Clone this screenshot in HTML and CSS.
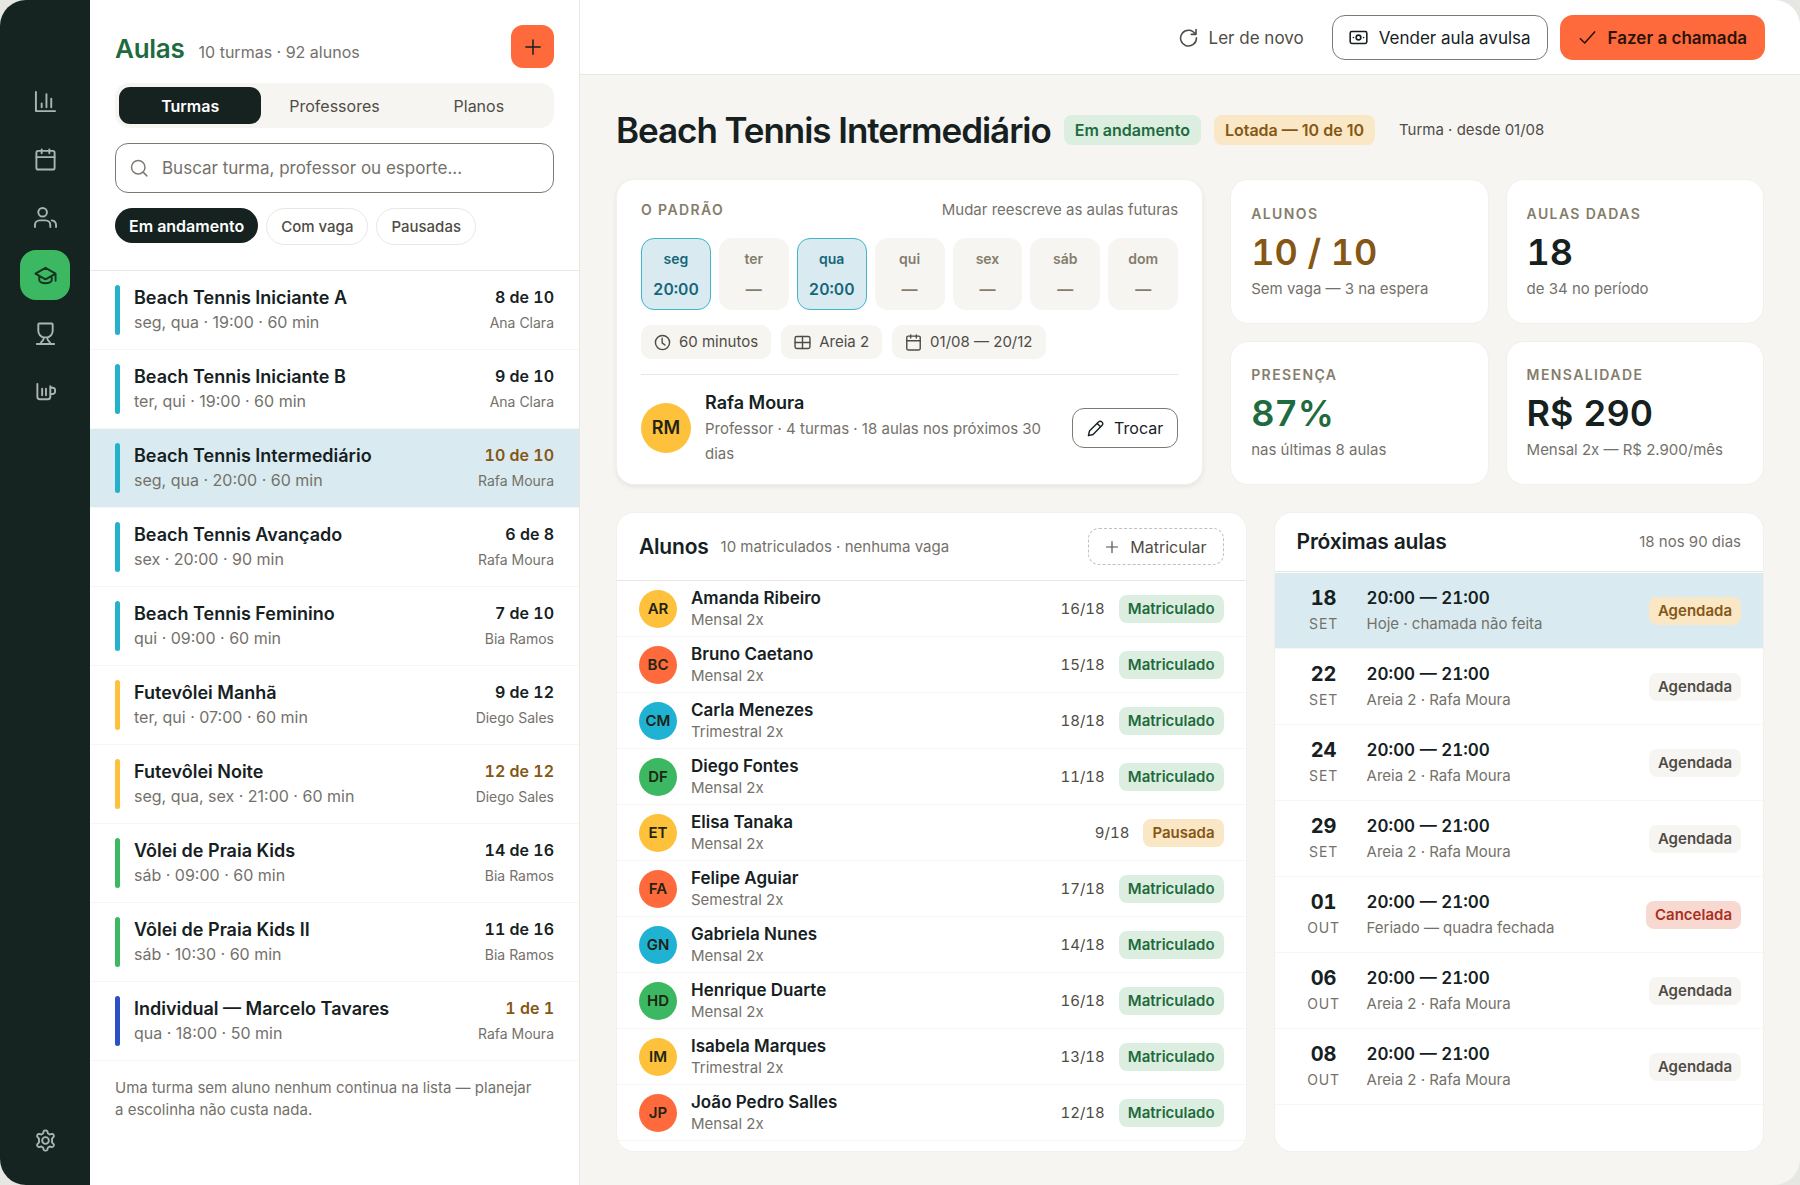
FILE: index.html
```html
<!DOCTYPE html>
<html lang="pt-BR">
<head>
<meta charset="utf-8">
<meta name="viewport" content="width=device-width, initial-scale=1">
<title>Aulas</title>
<link rel="stylesheet" href="styles.css">
</head>
<body>
<svg class="sprite" aria-hidden="true">
  <symbol id="i-chart" viewBox="0 0 24 24"><path d="M2 2v20h20M8 18v-4M13 18V4.500M18 18V9"/></symbol>
  <symbol id="i-calendar" viewBox="0 0 24 24"><rect x="2.500" y="3" width="19" height="19.500" rx="2"/><path d="M2.500 9.500h19M8 1.500v4M16 1.500v4"/></symbol>
  <symbol id="i-users" viewBox="0 0 24 24"><circle cx="9" cy="6.500" r="4.500"/><path d="M1 22v-2a5 5 0 0 1 5-5h6a5 5 0 0 1 5 5v2M18.500 15c2.500.3 4.500 2.300 4.500 5v2"/></symbol>
  <symbol id="i-cap" viewBox="0 0 24 24"><path d="M12 4 1.500 10 12 16l10.500-6zM5.500 12.500V17c0 1.500 3 3 6.500 3s6.500-1.500 6.500-3v-4.500M22.500 10v7.500"/></symbol>
  <symbol id="i-trophy" viewBox="0 0 24 24"><path d="M5.500 1.500h13c.5 0 1 .4 1 1V9c0 3.500-2.500 6.500-5.500 7v1.500c0 2.500 3 2 3 5.500M10 16v1.500c0 2.500-3 2-3 5.500M10 16c-3-.5-5.500-3.500-5.500-7V2.500c0-.6.500-1 1-1M10 16h4M3 23h18"/></symbol>
  <symbol id="i-mug" viewBox="0 0 24 24"><path d="M3.500 4v13.500a2.500 2.500 0 0 0 2.500 2.500h8.500a2.500 2.500 0 0 0 2.500-2.500V6.500M8.500 9v7M12.500 9v7M17 7.500l3.500.8a2 2 0 0 1 1.500 2v2a2 2 0 0 1-1.500 2L17 15"/></symbol>
  <symbol id="i-gear" viewBox="0 0 24 24"><circle cx="12" cy="12" r="3.500"/><path d="M10.200 2.200c.5-1 3.100-1 3.600 0l.8 2.500 1.700 1 2.600-.6c1.100-.2 2.400 2 1.700 2.900L18.800 10v4l1.800 2c.7.900-.6 3.100-1.700 2.900l-2.600-.6-1.700 1-.8 2.500c-.5 1-3.100 1-3.600 0l-.8-2.500-1.700-1-2.600.6c-1.100.2-2.400-2-1.700-2.900L5.200 14v-4L3.400 8c-.7-.9.600-3.100 1.700-2.900l2.600.6 1.700-1z"/></symbol>
  <symbol id="i-plus" viewBox="0 0 24 24"><path d="M12 2.500v19M2.500 12h19"/></symbol>
  <symbol id="i-search" viewBox="0 0 24 24"><circle cx="11" cy="11" r="9"/><path d="m17.500 17.500 5 5"/></symbol>
  <symbol id="i-refresh" viewBox="0 0 24 24"><path d="M20.500 7.500A10 10 0 1 0 22 12.500M21.500 2v6h-6"/></symbol>
  <symbol id="i-cash" viewBox="0 0 24 24"><rect x="1.500" y="4.500" width="21" height="15" rx="2"/><circle cx="12" cy="12" r="3"/><path d="M5.500 12h.1M18.400 12h.1"/></symbol>
  <symbol id="i-check" viewBox="0 0 24 24"><path d="m3 13.500 5.500 5.500L21 5"/></symbol>
  <symbol id="i-clock" viewBox="0 0 24 24"><circle cx="12" cy="12" r="10"/><path d="M11.500 6v6.500l4 3"/></symbol>
  <symbol id="i-court" viewBox="0 0 24 24"><rect x="1.500" y="3.500" width="21" height="17" rx="2.500"/><path d="M12 3.500v17M1.500 12h21"/></symbol>
  <symbol id="i-pencil" viewBox="0 0 24 24"><path d="M2 22l1.500-6.500L16.500 2.600a2.900 2.900 0 0 1 4.200 0l.7.700a2.900 2.900 0 0 1 0 4.200L8.500 20.500zM14.500 5l4.500 4.500"/></symbol>
</svg>

<div class="app">
  <nav class="rail" aria-label="Principal">
    <a class="rail-link" href="#painel" aria-label="Painel"><svg><use href="#i-chart"/></svg></a>
    <a class="rail-link" href="#agenda" aria-label="Agenda"><svg><use href="#i-calendar"/></svg></a>
    <a class="rail-link" href="#clientes" aria-label="Clientes"><svg><use href="#i-users"/></svg></a>
    <a class="rail-link is-active" href="#aulas" aria-label="Aulas" aria-current="page"><svg><use href="#i-cap"/></svg></a>
    <a class="rail-link" href="#torneios" aria-label="Torneios"><svg><use href="#i-trophy"/></svg></a>
    <a class="rail-link" href="#bar" aria-label="Bar"><svg><use href="#i-mug"/></svg></a>
    <a class="rail-link rail-end" href="#ajustes" aria-label="Ajustes"><svg><use href="#i-gear"/></svg></a>
  </nav>

  <aside class="panel">
    <header class="panel-head">
      <div class="panel-title">
        <h2>Aulas</h2>
        <span class="panel-count">10 turmas · 92 alunos</span>
        <button class="add" type="button" aria-label="Nova turma"><svg><use href="#i-plus"/></svg></button>
      </div>
      <div class="tabs">
        <button class="tab is-active" type="button">Turmas</button>
        <button class="tab" type="button">Professores</button>
        <button class="tab" type="button">Planos</button>
      </div>
      <label class="search">
        <svg><use href="#i-search"/></svg>
        <input type="search" placeholder="Buscar turma, professor ou esporte..." aria-label="Buscar turma, professor ou esporte">
      </label>
      <div class="filters">
        <button class="filter is-active" type="button">Em andamento</button>
        <button class="filter" type="button">Com vaga</button>
        <button class="filter" type="button">Pausadas</button>
      </div>
    </header>
    <ul class="classes">
      <li><a class="class cyan" href="#t1"><span class="class-name">Beach Tennis Iniciante A</span><span class="class-fill">8 de 10</span><span class="class-time">seg, qua · 19:00 · 60 min</span><span class="class-coach">Ana Clara</span></a></li>
      <li><a class="class cyan" href="#t2"><span class="class-name">Beach Tennis Iniciante B</span><span class="class-fill">9 de 10</span><span class="class-time">ter, qui · 19:00 · 60 min</span><span class="class-coach">Ana Clara</span></a></li>
      <li><a class="class cyan is-selected" href="#t3"><span class="class-name">Beach Tennis Intermediário</span><span class="class-fill full">10 de 10</span><span class="class-time">seg, qua · 20:00 · 60 min</span><span class="class-coach">Rafa Moura</span></a></li>
      <li><a class="class cyan" href="#t4"><span class="class-name">Beach Tennis Avançado</span><span class="class-fill">6 de 8</span><span class="class-time">sex · 20:00 · 90 min</span><span class="class-coach">Rafa Moura</span></a></li>
      <li><a class="class cyan" href="#t5"><span class="class-name">Beach Tennis Feminino</span><span class="class-fill">7 de 10</span><span class="class-time">qui · 09:00 · 60 min</span><span class="class-coach">Bia Ramos</span></a></li>
      <li><a class="class yellow" href="#t6"><span class="class-name">Futevôlei Manhã</span><span class="class-fill">9 de 12</span><span class="class-time">ter, qui · 07:00 · 60 min</span><span class="class-coach">Diego Sales</span></a></li>
      <li><a class="class yellow" href="#t7"><span class="class-name">Futevôlei Noite</span><span class="class-fill full">12 de 12</span><span class="class-time">seg, qua, sex · 21:00 · 60 min</span><span class="class-coach">Diego Sales</span></a></li>
      <li><a class="class green" href="#t8"><span class="class-name">Vôlei de Praia Kids</span><span class="class-fill">14 de 16</span><span class="class-time">sáb · 09:00 · 60 min</span><span class="class-coach">Bia Ramos</span></a></li>
      <li><a class="class green" href="#t9"><span class="class-name">Vôlei de Praia Kids II</span><span class="class-fill">11 de 16</span><span class="class-time">sáb · 10:30 · 60 min</span><span class="class-coach">Bia Ramos</span></a></li>
      <li><a class="class blue" href="#t10"><span class="class-name">Individual — Marcelo Tavares</span><span class="class-fill full">1 de 1</span><span class="class-time">qua · 18:00 · 50 min</span><span class="class-coach">Rafa Moura</span></a></li>
    </ul>
    <p class="panel-note">Uma turma sem aluno nenhum continua na lista — planejar a escolinha não custa nada.</p>
  </aside>

  <main class="main">
    <header class="topbar">
      <button class="btn btn-ghost" type="button"><svg><use href="#i-refresh"/></svg>Ler de novo</button>
      <button class="btn btn-outline" type="button"><svg><use href="#i-cash"/></svg>Vender aula avulsa</button>
      <button class="btn btn-primary" type="button"><svg><use href="#i-check"/></svg>Fazer a chamada</button>
    </header>

    <div class="content">
      <div class="heading">
        <h1>Beach Tennis Intermediário</h1>
        <span class="tag tag-large tag-green">Em andamento</span>
        <span class="tag tag-large tag-amber">Lotada — 10 de 10</span>
        <span class="heading-meta">Turma · desde 01/08</span>
      </div>

      <div class="overview">
        <section class="card pattern">
          <div class="pattern-head">
            <h3 class="label">O padrão</h3>
            <span class="muted">Mudar reescreve as aulas futuras</span>
          </div>
          <div class="days">
            <div class="day is-on"><span>seg</span><b>20:00</b></div>
            <div class="day"><span>ter</span><b>—</b></div>
            <div class="day is-on"><span>qua</span><b>20:00</b></div>
            <div class="day"><span>qui</span><b>—</b></div>
            <div class="day"><span>sex</span><b>—</b></div>
            <div class="day"><span>sáb</span><b>—</b></div>
            <div class="day"><span>dom</span><b>—</b></div>
          </div>
          <div class="facts">
            <span class="fact"><svg><use href="#i-clock"/></svg>60 minutos</span>
            <span class="fact"><svg><use href="#i-court"/></svg>Areia 2</span>
            <span class="fact"><svg><use href="#i-calendar"/></svg>01/08 — 20/12</span>
          </div>
          <div class="coach">
            <span class="avatar avatar-large yellow">RM</span>
            <div class="coach-text">
              <strong>Rafa Moura</strong>
              <p>Professor · 4 turmas · 18 aulas nos próximos 30 dias</p>
            </div>
            <button class="btn btn-outline btn-small" type="button"><svg><use href="#i-pencil"/></svg>Trocar</button>
          </div>
        </section>

        <div class="stats">
          <section class="card stat"><h3 class="label">Alunos</h3><strong class="text-amber">10 / 10</strong><p>Sem vaga — 3 na espera</p></section>
          <section class="card stat"><h3 class="label">Aulas dadas</h3><strong>18</strong><p>de 34 no período</p></section>
          <section class="card stat"><h3 class="label">Presença</h3><strong class="text-green">87%</strong><p>nas últimas 8 aulas</p></section>
          <section class="card stat"><h3 class="label">Mensalidade</h3><strong>R$ 290</strong><p>Mensal 2x — R$ 2.900/mês</p></section>
        </div>
      </div>

      <div class="details">
        <section class="card list-card">
          <header class="students-head">
            <h2>Alunos</h2>
            <span class="muted">10 matriculados · nenhuma vaga</span>
            <button class="btn btn-dashed" type="button"><svg><use href="#i-plus"/></svg>Matricular</button>
          </header>
          <ul>
            <li class="student"><span class="avatar yellow">AR</span><div class="student-text"><strong>Amanda Ribeiro</strong><span>Mensal 2x</span></div><span class="attendance">16/18</span><span class="tag tag-green">Matriculado</span></li>
            <li class="student"><span class="avatar orange">BC</span><div class="student-text"><strong>Bruno Caetano</strong><span>Mensal 2x</span></div><span class="attendance">15/18</span><span class="tag tag-green">Matriculado</span></li>
            <li class="student"><span class="avatar cyan">CM</span><div class="student-text"><strong>Carla Menezes</strong><span>Trimestral 2x</span></div><span class="attendance">18/18</span><span class="tag tag-green">Matriculado</span></li>
            <li class="student"><span class="avatar green">DF</span><div class="student-text"><strong>Diego Fontes</strong><span>Mensal 2x</span></div><span class="attendance">11/18</span><span class="tag tag-green">Matriculado</span></li>
            <li class="student"><span class="avatar yellow">ET</span><div class="student-text"><strong>Elisa Tanaka</strong><span>Mensal 2x</span></div><span class="attendance">9/18</span><span class="tag tag-amber">Pausada</span></li>
            <li class="student"><span class="avatar orange">FA</span><div class="student-text"><strong>Felipe Aguiar</strong><span>Semestral 2x</span></div><span class="attendance">17/18</span><span class="tag tag-green">Matriculado</span></li>
            <li class="student"><span class="avatar cyan">GN</span><div class="student-text"><strong>Gabriela Nunes</strong><span>Mensal 2x</span></div><span class="attendance">14/18</span><span class="tag tag-green">Matriculado</span></li>
            <li class="student"><span class="avatar green">HD</span><div class="student-text"><strong>Henrique Duarte</strong><span>Mensal 2x</span></div><span class="attendance">16/18</span><span class="tag tag-green">Matriculado</span></li>
            <li class="student"><span class="avatar yellow">IM</span><div class="student-text"><strong>Isabela Marques</strong><span>Trimestral 2x</span></div><span class="attendance">13/18</span><span class="tag tag-green">Matriculado</span></li>
            <li class="student"><span class="avatar orange">JP</span><div class="student-text"><strong>João Pedro Salles</strong><span>Mensal 2x</span></div><span class="attendance">12/18</span><span class="tag tag-green">Matriculado</span></li>
          </ul>
        </section>

        <section class="card list-card">
          <header class="lessons-head">
            <h2>Próximas aulas</h2>
            <span class="muted">18 nos 90 dias</span>
          </header>
          <ul>
            <li class="lesson is-today"><div class="date"><b>18</b><span>set</span></div><div class="lesson-text"><strong>20:00 — 21:00</strong><span>Hoje · chamada não feita</span></div><span class="tag tag-amber">Agendada</span></li>
            <li class="lesson"><div class="date"><b>22</b><span>set</span></div><div class="lesson-text"><strong>20:00 — 21:00</strong><span>Areia 2 · Rafa Moura</span></div><span class="tag tag-plain">Agendada</span></li>
            <li class="lesson"><div class="date"><b>24</b><span>set</span></div><div class="lesson-text"><strong>20:00 — 21:00</strong><span>Areia 2 · Rafa Moura</span></div><span class="tag tag-plain">Agendada</span></li>
            <li class="lesson"><div class="date"><b>29</b><span>set</span></div><div class="lesson-text"><strong>20:00 — 21:00</strong><span>Areia 2 · Rafa Moura</span></div><span class="tag tag-plain">Agendada</span></li>
            <li class="lesson"><div class="date"><b>01</b><span>out</span></div><div class="lesson-text"><strong>20:00 — 21:00</strong><span>Feriado — quadra fechada</span></div><span class="tag tag-red">Cancelada</span></li>
            <li class="lesson"><div class="date"><b>06</b><span>out</span></div><div class="lesson-text"><strong>20:00 — 21:00</strong><span>Areia 2 · Rafa Moura</span></div><span class="tag tag-plain">Agendada</span></li>
            <li class="lesson"><div class="date"><b>08</b><span>out</span></div><div class="lesson-text"><strong>20:00 — 21:00</strong><span>Areia 2 · Rafa Moura</span></div><span class="tag tag-plain">Agendada</span></li>
          </ul>
        </section>
      </div>
    </div>
  </main>
</div>
</body>
</html>
```

FILE: styles.css
```css
:root {
  --ink: #16211f;
  --text: #4f4c45;
  --muted: #74716a;
  --label: #857d6c;
  --line: #e8e7e3;
  --line-soft: #f6f6f3;
  --sand: #f6f5f2;
  --outline: #7d7a70;
  --cyan: #25b1cc;
  --cyan-soft: #d9ebf0;
  --yellow: #fdc13c;
  --green: #3db862;
  --orange: #ff6a3c;
  --blue: #2b52c4;
  --green-text: #1f6b40;
  --amber-text: #855614;
}

* { box-sizing: border-box; }

body {
  margin: 0;
  background: #e6e6e2;
  color: var(--ink);
  font: 400 15px/22px Inter, "Liberation Sans", sans-serif;
}

h1, h2, h3, p, ul { margin: 0; padding: 0; }
h1, h2, h3 { font-weight: 600; }
ul { list-style: none; }
a { color: inherit; text-decoration: none; }
button, input { font: inherit; color: inherit; }
button { padding: 0; border: 0; background: none; cursor: pointer; }
strong { font-weight: 600; }

svg {
  flex: none;
  fill: none;
  stroke: currentColor;
  stroke-width: 2;
  stroke-linecap: round;
  stroke-linejoin: round;
}
.sprite { display: none; }

.app {
  display: grid;
  grid-template-columns: 90px 490px minmax(0, 1fr);
  min-height: 100vh;
  border-radius: 26px;
  overflow: hidden;
  background: var(--sand);
}

/* Icon rail */
.rail {
  display: flex;
  flex-direction: column;
  align-items: center;
  gap: 8px;
  padding: 76px 0 20px;
  background: #162421;
  color: #a9b5b0;
}
.rail-link {
  display: grid;
  place-items: center;
  width: 50px;
  height: 50px;
  border-radius: 16px;
}
.rail-link svg { width: 23px; height: 23px; }
.rail-link.is-active { background: var(--green); color: #14351f; }
.rail-end { margin-top: auto; }

/* Class list panel */
.panel { background: #fff; border-right: 1px solid var(--line); }
.panel-head {
  display: flex;
  flex-direction: column;
  padding: 25px;
  border-bottom: 1px solid var(--line);
}
.panel-title { display: flex; align-items: baseline; gap: 14px; height: 43px; }
.panel-title h2 { color: var(--green-text); font-size: 26px; line-height: 47px; letter-spacing: -0.01em; }
.panel-count { color: var(--muted); font-size: 16px; }
.add {
  display: grid;
  place-items: center;
  align-self: flex-start;
  width: 43px;
  height: 43px;
  margin-left: auto;
  border-radius: 12px;
  background: var(--orange);
}
.add svg { width: 18px; height: 18px; }

.tabs {
  display: grid;
  grid-template-columns: repeat(3, 1fr);
  gap: 2px;
  height: 45px;
  margin-top: 15px;
  padding: 4px;
  border-radius: 14px;
  background: var(--sand);
}
.tab { border-radius: 11px; color: var(--text); font-size: 16px; }
.tab.is-active { background: #15221f; color: #fff; font-weight: 600; }

.search {
  display: flex;
  align-items: center;
  gap: 14px;
  height: 50px;
  margin-top: 15px;
  padding: 0 14px;
  border: 1px solid var(--outline);
  border-radius: 13px;
  color: var(--outline);
}
.search svg { width: 18px; height: 18px; }
.search input { flex: 1; min-width: 0; padding: 0; border: 0; outline: 0; background: none; font-size: 17px; }
.search input::placeholder { color: #74716a; opacity: 1; }

.filters { display: flex; align-items: flex-start; gap: 8px; margin-top: 15px; }
.filter {
  height: 37px;
  padding: 0 14px;
  border: 1px solid var(--line);
  border-radius: 19px;
  color: var(--text);
  font-weight: 500;
}
.filter.is-active { height: 35px; border: 0; background: #15221f; color: #fff; font-size: 16px; font-weight: 600; }

.class {
  display: grid;
  grid-template: 25px 25px / 5px minmax(0, 1fr) auto;
  column-gap: 14px;
  padding: 14px 25px;
  border-bottom: 1px solid var(--line-soft);
  line-height: 25px;
}
.class::before { content: ""; grid-row: 1 / 3; border-radius: 3px; background: var(--cyan); }
.class.yellow::before { background: var(--yellow); }
.class.green::before { background: var(--green); }
.class.blue::before { background: var(--blue); }
.class.is-selected { background: var(--cyan-soft); }
.class-name { font-size: 18px; font-weight: 600; }
.class-fill { font-size: 16px; font-weight: 600; text-align: right; font-variant-numeric: tabular-nums; }
.class-fill.full { color: var(--amber-text); }
.class-time { grid-column: 2; color: var(--muted); font-size: 16px; }
.class-coach { color: var(--muted); font-size: 14px; text-align: right; }
.panel-note { padding: 16px 36px 16px 25px; color: var(--muted); }

/* Buttons */
.topbar {
  display: flex;
  justify-content: flex-end;
  align-items: center;
  gap: 12px;
  padding: 15px 35px 14px;
  border-bottom: 1px solid var(--line);
  background: #fff;
}
.btn {
  display: inline-flex;
  align-items: center;
  gap: 11px;
  height: 45px;
  padding: 0 16px;
  border-radius: 13px;
  font-size: 17px;
  white-space: nowrap;
}
.btn svg { width: 19px; height: 19px; }
.btn-ghost { color: var(--text); }
.btn-outline { border: 1px solid var(--outline); background: #fff; }
.btn-primary { padding: 0 18px; background: var(--orange); color: #2b130a; font-weight: 600; }
.btn-small { height: 40px; padding: 0 14px; border-radius: 12px; font-size: 16px; gap: 10px; }
.btn-small svg { width: 17px; height: 17px; }
.btn-dashed {
  height: 37px;
  margin-left: auto;
  border: 1px dashed #c3c0b8;
  border-radius: 11px;
  color: var(--text);
  font-size: 16px;
}
.btn-dashed svg { width: 14px; height: 14px; }

/* Main column */
.main { display: flex; flex-direction: column; }
.content { display: flex; flex-direction: column; flex: 1; padding: 34px 36px 33px; }
.heading { display: flex; align-items: center; gap: 13px; height: 42px; }
h1 { font-size: 35px; line-height: 42px; letter-spacing: -0.03em; }
.heading-meta { margin-left: 11px; color: var(--text); }
.tag {
  padding: 3px 9px;
  border-radius: 8px;
  font-size: 15px;
  font-weight: 600;
  white-space: nowrap;
}
.tag-large { padding: 4px 11px; font-size: 16px; }
.tag-green { background: #dceedf; color: var(--green-text); }
.tag-amber { background: #f9e7c6; color: var(--amber-text); }
.tag-red { background: #f8d9d2; color: #ab2f1f; }
.tag-plain { background: var(--sand); color: var(--text); }

.card {
  border: 1px solid #f1f0ec;
  border-radius: 18px;
  background: #fff;
}
.label {
  color: var(--label);
  font-size: 14px;
  line-height: 20px;
  letter-spacing: 0.1em;
  text-transform: uppercase;
}
.muted { color: var(--muted); }
.text-amber { color: var(--amber-text); }
.text-green { color: var(--green-text); }

.overview {
  display: grid;
  grid-template-columns: minmax(0, 11fr) minmax(0, 10fr);
  gap: 27px;
  margin-top: 28px;
}
.pattern { padding: 20px 24px 18px; box-shadow: 0 2px 4px rgb(40 35 20 / 8%); }
.pattern-head { display: flex; align-items: center; justify-content: space-between; height: 20px; }
.days { display: grid; grid-template-columns: repeat(7, 1fr); gap: 8px; margin-top: 18px; }
.day {
  display: flex;
  flex-direction: column;
  align-items: center;
  gap: 8px;
  padding: 9px 0;
  border: 1px solid transparent;
  border-radius: 13px;
  background: var(--sand);
  color: var(--label);
  font-size: 14px;
  font-weight: 600;
}
.day b { font-size: 16px; font-weight: 600; font-variant-numeric: tabular-nums; }
.day.is-on { border-color: #3fb4cb; background: var(--cyan-soft); color: #17657a; }
.facts { display: flex; gap: 10px; margin-top: 15px; }
.fact {
  display: flex;
  align-items: center;
  gap: 8px;
  padding: 6px 13px;
  border-radius: 10px;
  background: var(--sand);
  color: var(--text);
}
.fact svg { width: 17px; height: 17px; }
.coach {
  display: flex;
  align-items: center;
  gap: 14px;
  margin-top: 15px;
  padding-top: 15px;
  border-top: 1px solid var(--line);
}
.coach-text { flex: 1; line-height: 25px; }
.coach-text strong { font-size: 18px; }
.coach-text p { color: var(--muted); }
.avatar {
  display: grid;
  place-items: center;
  flex: none;
  width: 38px;
  height: 38px;
  border-radius: 50%;
  color: #1f2413;
  font-size: 15px;
  font-weight: 600;
}
.avatar-large { width: 50px; height: 50px; font-size: 18px; }
.avatar.yellow { background: var(--yellow); }
.avatar.orange { background: var(--orange); }
.avatar.cyan { background: #20b2d2; }
.avatar.green { background: var(--green); }

.stats { display: grid; grid-template-columns: 1fr 1fr; grid-auto-rows: 1fr; gap: 17px; }
.stat { display: flex; flex-direction: column; justify-content: center; padding: 1px 20px 0; }
.stat strong { margin: 6px 0 4px; font-size: 36px; line-height: 44px; font-variant-numeric: tabular-nums; }
.stat p { color: var(--muted); }

.details {
  display: grid;
  grid-template-columns: minmax(0, 9fr) minmax(0, 7fr);
  flex: 1;
  gap: 27px;
  margin-top: 27px;
}
.list-card { overflow: hidden; }
.list-card h2 { font-size: 21px; line-height: 28px; letter-spacing: -0.01em; }
.students-head, .lessons-head {
  display: flex;
  align-items: center;
  gap: 12px;
  padding: 15px 22px;
  border-bottom: 1px solid var(--line);
}
.lessons-head { justify-content: space-between; }
.student {
  display: flex;
  align-items: center;
  gap: 14px;
  height: 56px;
  padding: 0 22px;
  border-bottom: 1px solid var(--line-soft);
}
.student-text { display: flex; flex-direction: column; flex: 1; line-height: 21px; }
.student-text strong { font-size: 17px; }
.student-text span { color: var(--muted); }
.attendance { color: var(--text); font-variant-numeric: tabular-nums; }

.lesson {
  display: flex;
  align-items: center;
  gap: 16px;
  padding: 13px 22px 12px;
  border-bottom: 1px solid var(--line-soft);
}
.lesson.is-today { background: var(--cyan-soft); }
.lessons-head + ul { padding-top: 1px; }
.date { width: 54px; text-align: center; line-height: 25px; }
.date b, .date span { display: block; }
.date b { font-size: 20px; font-weight: 700; font-variant-numeric: tabular-nums; }
.date span { color: var(--muted); font-size: 14px; letter-spacing: 0.06em; text-transform: uppercase; }
.lesson-text { display: flex; flex-direction: column; flex: 1; line-height: 25px; }
.lesson-text strong { font-size: 17px; font-variant-numeric: tabular-nums; }
.lesson-text span { color: var(--muted); }
```
